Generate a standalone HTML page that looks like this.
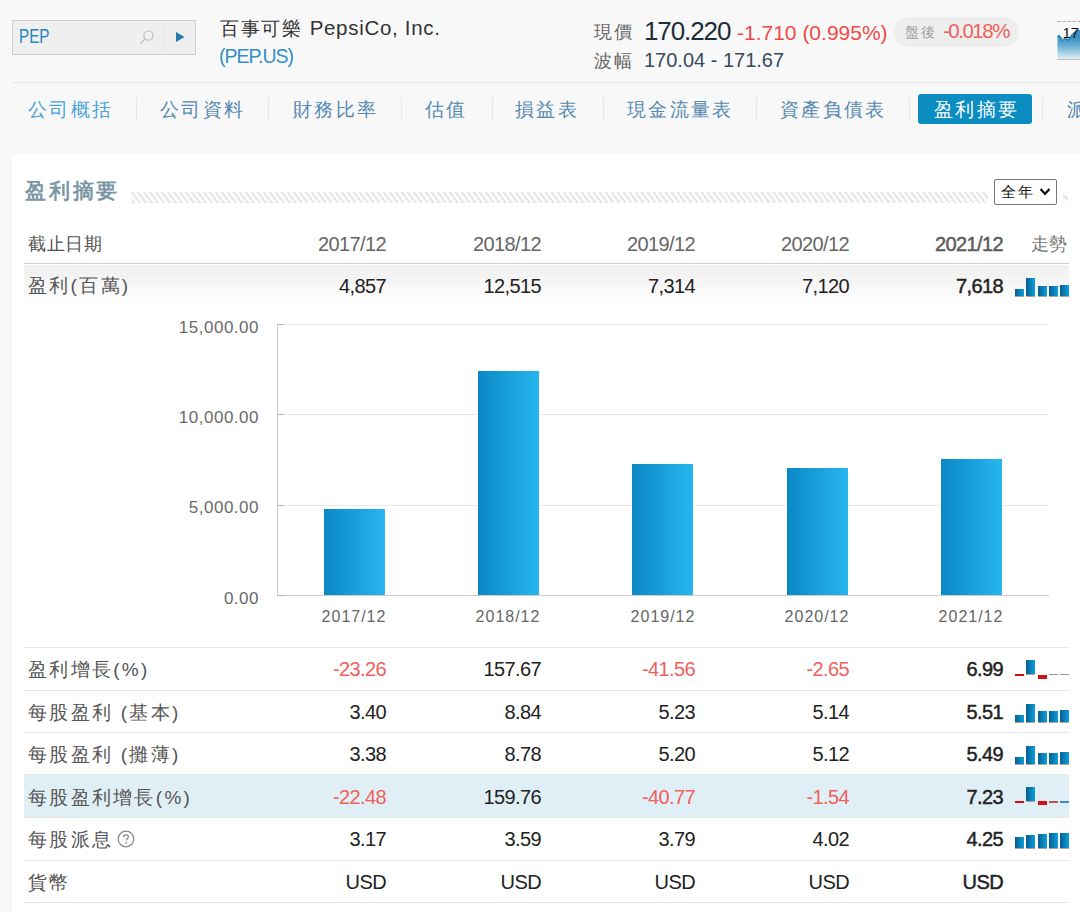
<!DOCTYPE html>
<html><head><meta charset="utf-8">
<style>
*{box-sizing:border-box}
html,body{margin:0;padding:0}
body{width:1080px;height:912px;overflow:hidden;background:#f8f8f8;font-family:"Liberation Sans",sans-serif;position:relative;color:#333}
.a{position:absolute;white-space:nowrap}
.sep{position:absolute;top:97px;width:1px;height:24px;background:#e8e8e8}
.nav{position:absolute;white-space:nowrap;top:97px;font-size:19px;line-height:26px;letter-spacing:2.3px;color:#558ab2}
.card{position:absolute;left:12px;top:154px;width:1080px;height:780px;background:#fff;border-radius:3px}
.row{position:absolute;left:24px;width:1045px;height:43px;border-top:1px solid #e8e8e8}
.lbl{position:absolute;left:4px;font-size:19px;line-height:42px;color:#555;letter-spacing:2.3px}
.v{position:absolute;font-size:20px;line-height:42px;color:#222;text-align:right;width:140px;letter-spacing:-0.6px}
.r .v,.r .lbl{padding-top:1px}
.r .lbl{padding-top:2px}
.neg{color:#f0605d}
.b{-webkit-text-stroke:0.45px currentColor;color:#222}
.spk{position:absolute;left:991px;width:54px;height:42px}
.bar{position:absolute;width:9px;background:linear-gradient(90deg,#075e92,#0aa0dc);border-bottom:1px solid #b0a49a}
.rb{position:absolute;width:9px;background:#d40f0f}
.gl{position:absolute;width:9px;height:1px;background:#999}
</style></head><body>
<!-- search box -->
<div class="a" style="left:12px;top:20px;width:184px;height:35px;background:#efefef;border:1px solid #cfcfcf"></div>
<div class="a" style="left:19px;top:23px;font-size:20px;line-height:26px;color:#1f87bf;transform:scaleX(0.76);transform-origin:0 0">PEP</div>
<svg class="a" style="left:139px;top:29px" width="16" height="16" viewBox="0 0 16 16"><circle cx="9.5" cy="6.5" r="4.6" fill="none" stroke="#c4c4c4" stroke-width="1.4"/><line x1="6.2" y1="9.8" x2="1.5" y2="14.5" stroke="#c4c4c4" stroke-width="1.6"/></svg>
<div class="a" style="left:163px;top:25px;width:1px;height:26px;background:#e4e4e4"></div>
<svg class="a" style="left:175px;top:31px" width="11" height="12" viewBox="0 0 11 12"><path d="M1 1 L9.5 6 L1 11 Z" fill="#2479ad"/></svg>

<!-- title -->
<div class="a" style="left:220px;top:15px;font-size:18.5px;line-height:26px;color:#333;letter-spacing:1.7px">百事可樂 <span style="font-size:20.5px;letter-spacing:0.7px">PepsiCo, Inc.</span></div>
<div class="a" style="left:219px;top:43px;font-size:19.5px;line-height:26px;color:#3290c6;letter-spacing:-1px">(PEP.US)</div>

<!-- price -->
<div class="a" style="left:594px;top:19px;font-size:17.5px;line-height:26px;color:#666;letter-spacing:1.5px">現價</div>
<div class="a" style="left:644px;top:16px;font-size:26px;line-height:30px;color:#1c2d3b;letter-spacing:-1.1px">170.220</div>
<div class="a" style="left:737px;top:20px;font-size:21px;line-height:26px;color:#f04a46;letter-spacing:0px">-1.710 (0.995%)</div>
<div class="a" style="left:894px;top:17px;width:126px;height:30px;border-radius:15px;background:#eeeeee"></div>
<div class="a" style="left:905px;top:22px;font-size:14px;line-height:20px;color:#a0a0a0;letter-spacing:2px">盤後</div>
<div class="a" style="left:943px;top:18px;font-size:20.5px;line-height:26px;color:#f25f5c;letter-spacing:-1.5px">-0.018%</div>
<div class="a" style="left:594px;top:48px;font-size:17.5px;line-height:26px;color:#666;letter-spacing:1.5px">波幅</div>
<div class="a" style="left:644px;top:47px;font-size:20px;line-height:26px;color:#3a4a5a">170.04 - 171.67</div>

<!-- mini chart -->
<svg class="a" style="left:1056px;top:18px" width="24" height="44" viewBox="0 0 24 44">
<defs><linearGradient id="mg" x1="0" y1="0" x2="0" y2="1"><stop offset="0.25" stop-color="#3a90c2"/><stop offset="0.55" stop-color="#6fb2d6"/><stop offset="1" stop-color="#e3f1f7"/></linearGradient></defs>
<line x1="1.5" y1="3.5" x2="24" y2="3.5" stroke="#a8a8a8" stroke-dasharray="3.3 1.7" stroke-width="1"/>
<path d="M1.5 19 L3 17.5 L5 20 L6.5 22.5 L8.5 21 L10.5 20.5 L12 22.5 L14 20 L16 17 L18 15 L20 13.5 L22 12.5 L24 13 L24 41.5 L1.5 41.5 Z" fill="url(#mg)"/><path d="M1.5 19 L3 17.5 L5 20 L6.5 22.5 L8.5 21 L10.5 20.5 L12 22.5 L14 20 L16 17 L18 15 L20 13.5 L22 12.5 L24 13" fill="none" stroke="#2a86bd" stroke-width="1.5"/>
<line x1="1.5" y1="41.5" x2="24" y2="41.5" stroke="#c4bcb4" stroke-width="1"/>
<text x="6.5" y="20" font-family="Liberation Sans" font-size="15" fill="#111">17</text>
</svg>

<!-- header separator -->
<div class="a" style="left:12px;top:82px;width:1068px;height:1px;background:#e6e6e6"></div>

<!-- nav -->
<div class="nav" style="left:28px;color:#4aa6d6">公司概括</div>
<div class="sep" style="left:136px"></div>
<div class="nav" style="left:160px">公司資料</div>
<div class="sep" style="left:268px"></div>
<div class="nav" style="left:293px">財務比率</div>
<div class="sep" style="left:401px"></div>
<div class="nav" style="left:425px">估值</div>
<div class="sep" style="left:492px"></div>
<div class="nav" style="left:515px">損益表</div>
<div class="sep" style="left:603px"></div>
<div class="nav" style="left:627px">現金流量表</div>
<div class="sep" style="left:756px"></div>
<div class="nav" style="left:780px">資產負債表</div>
<div class="sep" style="left:909px"></div>
<div class="a" style="left:918px;top:94px;width:114px;height:30px;background:#0b8dc2;border-radius:3px"></div>
<div class="nav" style="left:934px;color:#fff">盈利摘要</div>
<div class="sep" style="left:1042px"></div>
<div class="nav" style="left:1067px">派息</div>

<!-- card -->
<div class="card"></div>
<div class="a" style="left:25px;top:176px;font-size:21px;line-height:30px;color:#7b97a6;font-weight:bold;letter-spacing:2.8px">盈利摘要</div>
<div class="a" style="left:131px;top:192px;width:937px;height:11px;background:repeating-linear-gradient(54deg,#fff 0 2.3px,#e8e8e8 2.3px 4.85px);background-position:-1.5px 0"></div>
<div class="a" style="left:988px;top:175px;width:75px;height:32px;background:#fff"></div>
<div class="a" style="left:994px;top:179px;width:63px;height:26px;border:1px solid #777;border-radius:2px;background:#fff"></div>
<div class="a" style="left:1001px;top:180px;font-size:15px;line-height:24px;color:#111;letter-spacing:1.5px">全年</div>
<svg class="a" style="left:1039px;top:187px" width="12" height="10" viewBox="0 0 12 10"><path d="M1.5 2 L6 6.8 L10.5 2" fill="none" stroke="#111" stroke-width="2.2"/></svg>

<!-- table header -->
<div class="a" style="left:24px;top:223px;width:1045px;height:41px;border-bottom:1px solid #cfcfcf"></div>
<div class="lbl" style="top:223px;left:28px;font-size:18px;letter-spacing:0.6px">截止日期</div>
<div class="v" style="top:223px;left:246px;color:#666">2017/12</div>
<div class="v" style="top:223px;left:401px;color:#666">2018/12</div>
<div class="v" style="top:223px;left:555px;color:#666">2019/12</div>
<div class="v" style="top:223px;left:709px;color:#666">2020/12</div>
<div class="v b" style="top:223px;left:863px;color:#5a5a5a">2021/12</div>
<div class="a" style="left:1031px;top:223px;font-size:18px;line-height:42px;color:#777">走勢</div>

<!-- row 1 -->
<div class="a" style="left:24px;top:265px;width:1045px;height:41px;background:linear-gradient(#efefef,#fff)"></div>
<div class="lbl" style="top:265px;left:28px">盈利(百萬)</div>
<div class="v" style="top:265px;left:246px">4,857</div>
<div class="v" style="top:265px;left:401px">12,515</div>
<div class="v" style="top:265px;left:555px">7,314</div>
<div class="v" style="top:265px;left:709px">7,120</div>
<div class="v b" style="top:265px;left:863px">7,618</div>
<div class="bar" style="left:1015px;top:289px;height:8px"></div>
<div class="bar" style="left:1026px;top:278px;height:19px"></div>
<div class="bar" style="left:1038px;top:286px;height:11px"></div>
<div class="bar" style="left:1049px;top:286px;height:11px"></div>
<div class="bar" style="left:1060px;top:285px;height:12px"></div>

<!-- chart -->
<svg class="a" style="left:0;top:300px" width="1080" height="350" viewBox="0 300 1080 350">
<defs><linearGradient id="bg" x1="0" y1="0" x2="1" y2="0"><stop offset="0" stop-color="#0a88c4"/><stop offset="1" stop-color="#27b6ee"/></linearGradient></defs>
<g stroke="#e8e8e8" stroke-width="1">
<line x1="277" y1="324.5" x2="1049" y2="324.5"/>
<line x1="277" y1="414.5" x2="1049" y2="414.5"/>
<line x1="277" y1="505.5" x2="1049" y2="505.5"/>
</g>
<line x1="277" y1="595.5" x2="1049" y2="595.5" stroke="#cccccc"/>
<line x1="277.5" y1="324" x2="277.5" y2="596" stroke="#cccccc"/>
<g stroke="#b4b4b4" stroke-width="1"><line x1="277" y1="324.5" x2="284" y2="324.5"/><line x1="277" y1="414.5" x2="284" y2="414.5"/><line x1="277" y1="505.5" x2="284" y2="505.5"/><line x1="277" y1="595.5" x2="284" y2="595.5"/></g>
<g fill="url(#bg)">
<rect x="324" y="509" width="61" height="86"/>
<rect x="478" y="371" width="61" height="224"/>
<rect x="632" y="464" width="61" height="131"/>
<rect x="787" y="468" width="61" height="127"/>
<rect x="941" y="459" width="61" height="136"/>
</g>
<g font-family="Liberation Sans" font-size="17" fill="#6a6a6a" text-anchor="end" letter-spacing="0.5">
<text x="259" y="333">15,000.00</text>
<text x="259" y="423">10,000.00</text>
<text x="259" y="513">5,000.00</text>
<text x="259" y="604">0.00</text>
</g>
<g font-family="Liberation Sans" font-size="16" fill="#666" text-anchor="middle" letter-spacing="1">
<text x="354" y="622">2017/12</text>
<text x="508" y="622">2018/12</text>
<text x="663" y="622">2019/12</text>
<text x="817" y="622">2020/12</text>
<text x="971" y="622">2021/12</text>
</g>
</svg>

<!-- rows --><div class="r">
<div class="row" style="top:647px"></div>
<div class="lbl" style="top:647px;left:28px">盈利增長(%)</div>
<div class="v neg" style="top:647px;left:246px">-23.26</div>
<div class="v" style="top:647px;left:401px">157.67</div>
<div class="v neg" style="top:647px;left:555px">-41.56</div>
<div class="v neg" style="top:647px;left:709px">-2.65</div>
<div class="v b" style="top:647px;left:863px">6.99</div>
<div class="rb" style="left:1015px;top:674px;height:2px"></div>
<div class="bar" style="left:1026px;top:660px;height:15px"></div>
<div class="rb" style="left:1038px;top:675px;height:4px"></div>
<div class="gl" style="left:1049px;top:674px"></div>
<div class="gl" style="left:1060px;top:674px"></div>

<div class="row" style="top:690px"></div>
<div class="lbl" style="top:690px;left:28px">每股盈利 (基本)</div>
<div class="v" style="top:690px;left:246px">3.40</div>
<div class="v" style="top:690px;left:401px">8.84</div>
<div class="v" style="top:690px;left:555px">5.23</div>
<div class="v" style="top:690px;left:709px">5.14</div>
<div class="v b" style="top:690px;left:863px">5.51</div>
<div class="bar" style="left:1015px;top:715px;height:8px"></div>
<div class="bar" style="left:1026px;top:704px;height:19px"></div>
<div class="bar" style="left:1038px;top:711px;height:12px"></div>
<div class="bar" style="left:1049px;top:711px;height:12px"></div>
<div class="bar" style="left:1060px;top:710px;height:13px"></div>

<div class="row" style="top:732px"></div>
<div class="lbl" style="top:732px;left:28px">每股盈利 (攤薄)</div>
<div class="v" style="top:732px;left:246px">3.38</div>
<div class="v" style="top:732px;left:401px">8.78</div>
<div class="v" style="top:732px;left:555px">5.20</div>
<div class="v" style="top:732px;left:709px">5.12</div>
<div class="v b" style="top:732px;left:863px">5.49</div>
<div class="bar" style="left:1015px;top:757px;height:8px"></div>
<div class="bar" style="left:1026px;top:746px;height:19px"></div>
<div class="bar" style="left:1038px;top:753px;height:12px"></div>
<div class="bar" style="left:1049px;top:753px;height:12px"></div>
<div class="bar" style="left:1060px;top:752px;height:13px"></div>

<div class="row" style="top:774px;background:#e0eff6;border-top-color:#e3e9ec"></div>
<div class="lbl" style="top:775px;left:28px">每股盈利增長(%)</div>
<div class="v neg" style="top:775px;left:246px">-22.48</div>
<div class="v" style="top:775px;left:401px">159.76</div>
<div class="v neg" style="top:775px;left:555px">-40.77</div>
<div class="v neg" style="top:775px;left:709px">-1.54</div>
<div class="v b" style="top:775px;left:863px">7.23</div>
<div class="rb" style="left:1015px;top:801px;height:2px"></div>
<div class="bar" style="left:1026px;top:787px;height:15px"></div>
<div class="rb" style="left:1038px;top:801px;height:4px"></div>
<div class="gl" style="left:1049px;top:801px;height:2px;background:#c05050"></div>
<div class="gl" style="left:1060px;top:801px;height:2px;background:#3a8fc0"></div>

<div class="row" style="top:817px"></div>
<div class="lbl" style="top:817px;left:28px">每股派息</div>
<svg class="a" style="left:117px;top:830px" width="18" height="18" viewBox="0 0 18 18"><circle cx="9" cy="9" r="7.8" fill="none" stroke="#8a8a8a" stroke-width="1.3"/><path d="M6.6 7.2 C6.6 5.6 7.7 4.8 9 4.8 C10.4 4.8 11.4 5.7 11.4 6.9 C11.4 8.4 9.2 8.6 9.2 10.6" fill="none" stroke="#8a8a8a" stroke-width="1.3"/><circle cx="9.2" cy="12.9" r="0.9" fill="#8a8a8a"/></svg>
<div class="v" style="top:817px;left:246px">3.17</div>
<div class="v" style="top:817px;left:401px">3.59</div>
<div class="v" style="top:817px;left:555px">3.79</div>
<div class="v" style="top:817px;left:709px">4.02</div>
<div class="v b" style="top:817px;left:863px">4.25</div>
<div class="bar" style="left:1015px;top:837px;height:12px"></div>
<div class="bar" style="left:1026px;top:835px;height:14px"></div>
<div class="bar" style="left:1038px;top:834px;height:15px"></div>
<div class="bar" style="left:1049px;top:833px;height:16px"></div>
<div class="bar" style="left:1060px;top:833px;height:16px"></div>

<div class="row" style="top:860px;height:43px;border-bottom:1px solid #e8e8e8"></div>
<div class="lbl" style="top:860px;left:28px">貨幣</div>
<div class="v" style="top:860px;left:246px">USD</div>
<div class="v" style="top:860px;left:401px">USD</div>
<div class="v" style="top:860px;left:555px">USD</div>
<div class="v" style="top:860px;left:709px">USD</div>
<div class="v b" style="top:860px;left:863px">USD</div>

</div></body></html>
